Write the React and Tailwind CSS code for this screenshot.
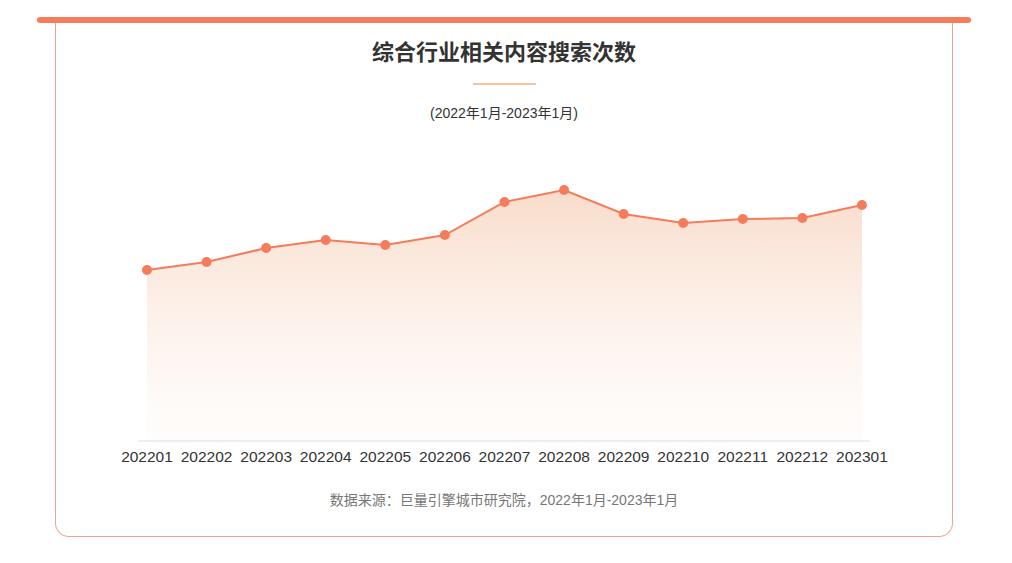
export default function App() {
  const ys = [270, 262, 248, 240, 245, 235, 202, 190, 214, 223, 219, 218, 205];
  const labels = ["202201","202202","202203","202204","202205","202206","202207","202208","202209","202210","202211","202212","202301"];
  const top = 150;
  const pts = ys.map((y, i) => [147 - 55 + i * 59.58, y - top]);
  const line = pts.map((p) => p.join(",")).join(" ");
  const area = `${pts[0][0]},291 ${line} ${pts[12][0]},291`;
  return (
    <div className="w-[1012px] h-[563px] bg-white pt-[17px] pl-[37px] pr-[41px]" style={{ fontFamily: '"Liberation Sans","Noto Sans CJK SC",sans-serif' }}>
      <div className="h-[6px] rounded-full bg-[#f47c5c] relative z-10" />
      <div className="mx-[18px] -mt-[3px] h-[517px] border border-t-0 border-[#f3a188] rounded-b-[14px] flex flex-col items-center">
        <div className="mt-[18px] text-[22px] font-bold text-[#333] leading-[30px]">综合行业相关内容搜索次数</div>
        <div className="mt-[15px] w-[63px] h-[2px] bg-[#f7c4a2]" />
        <div className="mt-[18px] text-[14px] text-[#333] leading-[20px]">(2022年1月-2023年1月)</div>
        <svg className="mt-[27px]" width="899" height="325" viewBox="0 0 899 325">
          <defs>
            <linearGradient id="g" x1="0" y1="0" x2="0" y2="1">
              <stop offset="0" stopColor="#f7d3bd" stopOpacity="0.8" />
              <stop offset="1" stopColor="#fdf3ec" stopOpacity="0.2" />
            </linearGradient>
          </defs>
          <polygon points={area} fill="url(#g)" />
          <line x1="83" y1="291" x2="815" y2="291" stroke="#ddd" strokeWidth="1" />
          <polyline points={line} fill="none" stroke="#f47c5c" strokeWidth="2" />
          {pts.map((p, i) => (
            <circle key={i} cx={p[0]} cy={p[1]} r="5" fill="#f47c5c" />
          ))}
          {pts.map((p, i) => (
            <text key={"t" + i} x={p[0]} y="312" textAnchor="middle" fontSize="15.5" fill="#333" fontFamily='"Liberation Sans",sans-serif'>{labels[i]}</text>
          ))}
        </svg>
        <div className="mt-[15px] text-[14px] text-[#777] leading-[20px]">数据来源：巨量引擎城市研究院，2022年1月-2023年1月</div>
      </div>
    </div>
  );
}
